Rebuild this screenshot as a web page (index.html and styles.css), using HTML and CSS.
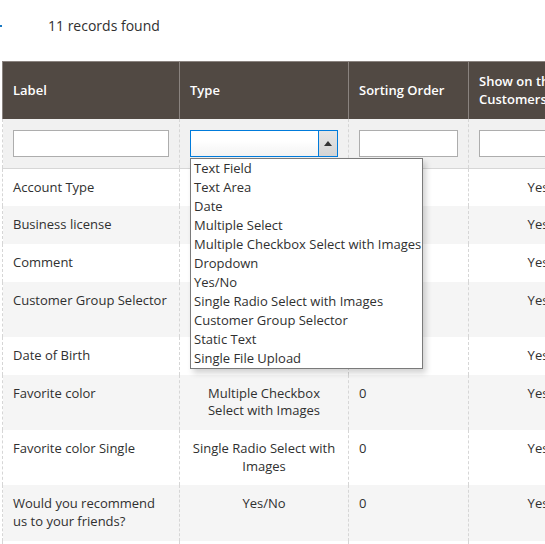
FILE: index.html
```
<!DOCTYPE html>
<html lang="en">
<head>
  <meta charset="UTF-8" />
  <title>Customer Attributes</title>
  <link rel="stylesheet" href="styles.css">
</head>
<body>

  <div class="toolbar">
    <span class="toolbar-mark"></span>
    <span class="records">11 records found</span>
  </div>

  <table class="grid">
    <colgroup>
      <col class="col-label">
      <col class="col-type">
      <col class="col-sort">
      <col class="col-show">
    </colgroup>
    <thead>
      <tr class="grid-head">
        <th>Label</th>
        <th>Type</th>
        <th>Sorting Order</th>
        <th>Show on the Customers Grid</th>
      </tr>
      <tr class="grid-filters">
        <td><input type="text" class="filter-input"></td>
        <td>
          <div class="select-wrap">
            <div class="fake-select">
              <span class="select-arrow"></span>
            </div>
            <!-- opened options list -->
            <ul class="options">
              <li>Text Field</li>
              <li>Text Area</li>
              <li>Date</li>
              <li>Multiple Select</li>
              <li>Multiple Checkbox Select with Images</li>
              <li>Dropdown</li>
              <li>Yes/No</li>
              <li>Single Radio Select with Images</li>
              <li>Customer Group Selector</li>
              <li>Static Text</li>
              <li>Single File Upload</li>
            </ul>
          </div>
        </td>
        <td><input type="text" class="filter-input"></td>
        <td><input type="text" class="filter-input"></td>
      </tr>
    </thead>
    <tbody>
      <tr>
        <td>Account Type</td>
        <td class="center">Dropdown</td>
        <td>0</td>
        <td class="center">Yes</td>
      </tr>
      <tr>
        <td>Business license</td>
        <td class="center">Single File Upload</td>
        <td>0</td>
        <td class="center">Yes</td>
      </tr>
      <tr>
        <td>Comment</td>
        <td class="center">Text Area</td>
        <td>0</td>
        <td class="center">Yes</td>
      </tr>
      <tr>
        <td>Customer Group Selector</td>
        <td class="center">Customer Group Selector</td>
        <td>0</td>
        <td class="center">Yes</td>
      </tr>
      <tr>
        <td>Date of Birth</td>
        <td class="center">Date</td>
        <td>0</td>
        <td class="center">Yes</td>
      </tr>
      <tr>
        <td>Favorite color</td>
        <td class="center">Multiple Checkbox Select with Images</td>
        <td>0</td>
        <td class="center">Yes</td>
      </tr>
      <tr>
        <td>Favorite color Single</td>
        <td class="center">Single Radio Select with Images</td>
        <td>0</td>
        <td class="center">Yes</td>
      </tr>
      <tr>
        <td>Would you recommend us to your friends?</td>
        <td class="center">Yes/No</td>
        <td>0</td>
        <td class="center">Yes</td>
      </tr>
      <tr>
        <td>Gender</td>
        <td class="center">Dropdown</td>
        <td>0</td>
        <td class="center">Yes</td>
      </tr>
    </tbody>
  </table>

</body>
</html>
```

FILE: styles.css
```
* {
  box-sizing: border-box;
  margin: 0;
  padding: 0;
}

body {
  font-family: 'Open Sans', 'Noto Sans', sans-serif;
  color: #303030;
  background: #fff;
  overflow: hidden;
}

.toolbar {
  display: flex;
  align-items: center;
  height: 50px;
  padding-top: 1px;
}

.toolbar-mark {
  width: 2px;
  height: 2px;
  background: #1979c3;
}

.records {
  margin-left: 46px;
  font-size: 14px;
}

.grid {
  margin: 11px 0 0 2px;
  border-collapse: collapse;
  table-layout: fixed;
  width: 605px;
  font-size: 13px;
  line-height: 1.36;
}

.col-label { width: 177px; }
.col-type  { width: 169px; }
.col-sort  { width: 120px; }
.col-show  { width: 139px; }

.grid-head th {
  background: #514943;
  color: #fff;
  font-weight: 600;
  text-align: left;
  vertical-align: middle;
  padding: 11px 10px 10px;
  height: 57px;
  border: 1px solid #8a837f;
  border-bottom: none;
}

.grid-filters td {
  background: #f1f1f1;
  padding: 11px 10px;
  border-left: 1px dashed #d6d6d6;
  border-right: 1px dashed #d6d6d6;
  border-bottom: 1px solid #d6d6d6;
}

.filter-input {
  display: block;
  width: 100%;
  height: 27px;
  border: 1px solid #adadad;
  background: #fff;
  outline: none;
}

.select-wrap {
  position: relative;
}

.fake-select {
  height: 27px;
  border: 1px solid #007bdb;
  background: linear-gradient(#fff 40%, #f3f3f3);
  position: relative;
}

.select-arrow {
  position: absolute;
  top: 0;
  right: 0;
  width: 19px;
  height: 25px;
  border-left: 1px solid #007bdb;
  background: linear-gradient(#e6e6e6, #d4d4d4);
}

.select-arrow::after {
  content: "";
  position: absolute;
  left: 5px;
  top: 10px;
  border-left: 4px solid transparent;
  border-right: 4px solid transparent;
  border-bottom: 5px solid #333;
}

.options {
  position: absolute;
  top: 28px;
  left: 0;
  width: 233px;
  list-style: none;
  background: #fff;
  border: 1px solid #7a7a7a;
  box-shadow: 3px 4px 6px rgba(0, 0, 0, 0.18);
  z-index: 2;
}

.options li {
  height: 19px;
  line-height: 19px;
  padding-left: 3px;
  white-space: nowrap;
}

.grid tbody td {
  padding: 10px;
  vertical-align: top;
  border-left: 1px dashed #d6d6d6;
  border-right: 1px dashed #d6d6d6;
}

.grid tbody tr:nth-child(even) td {
  background: #f5f5f5;
}

.grid .center {
  text-align: center;
}
```
